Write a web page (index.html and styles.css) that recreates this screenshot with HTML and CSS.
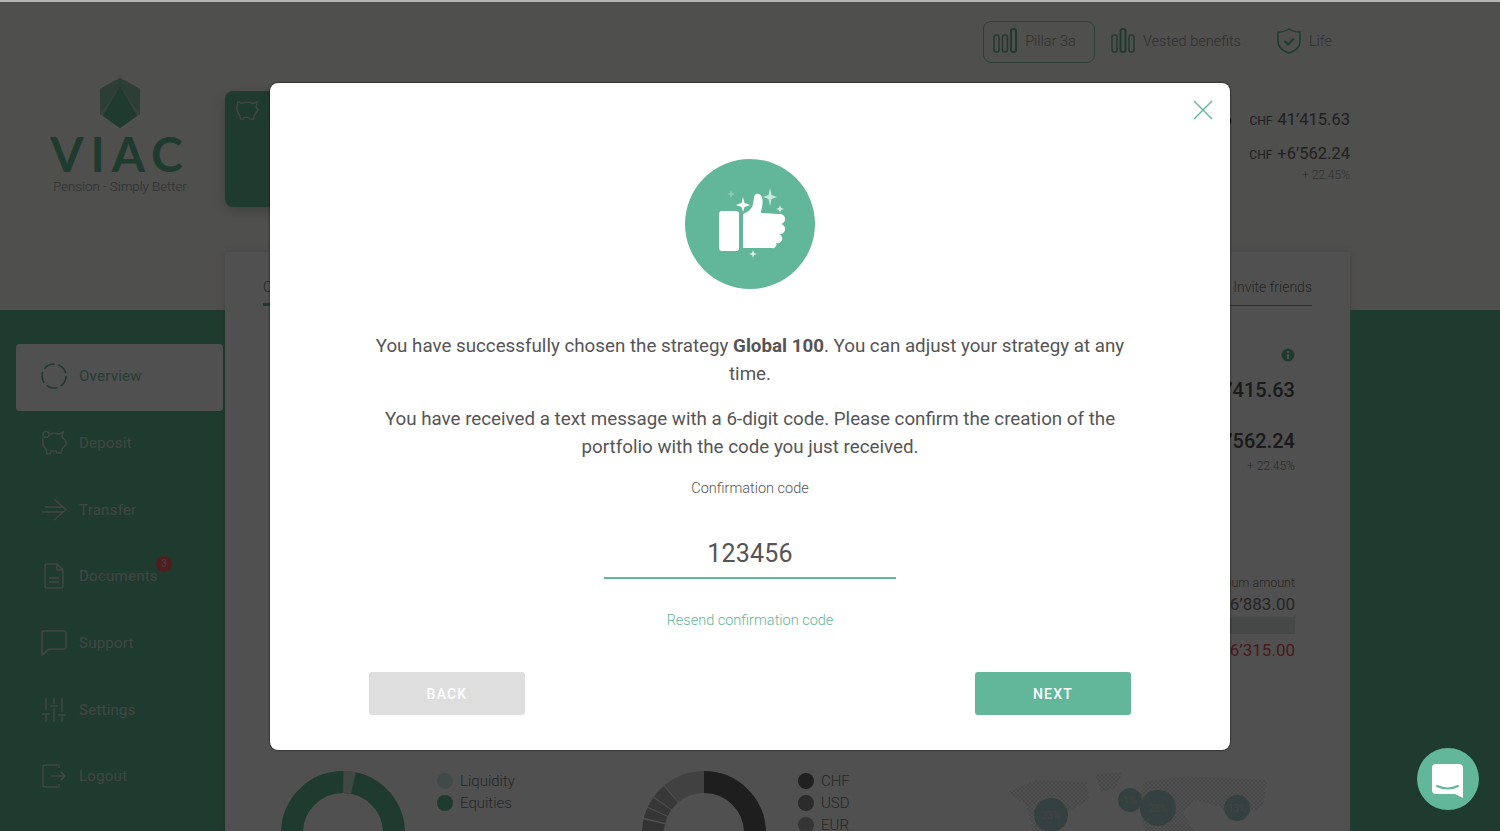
FILE: index.html
```html
<!DOCTYPE html>
<html lang="en">
<head>
  <meta charset="UTF-8">
  <meta name="viewport" content="width=device-width, initial-scale=1.0">
  <title>VIAC - Overview</title>
  <link rel="stylesheet" href="styles.css">
</head>
<body>
  <div class="page">
    <div class="brand">
      <svg class="brand-mark" viewBox="0 0 42 50" width="42" height="50">
        <path d="M21 0 L41 11 L41 36 L21 50 L1 36 L1 11 Z" fill="#a5d2bd"/>
        <path d="M21 8 L38 38 L21 50 L4 38 Z" fill="#63b992"/>
        <path d="M21 0 L41 11 L41 36 L21 8 L1 36 L1 11 Z" fill="#8fc7ad"/>
      </svg>
      <div class="brand-name">VIAC</div>
      <div class="brand-tag">Pension - Simply Better</div>
    </div>

    <div class="top">
      <div class="products">
        <a class="product product-active">
          <svg viewBox="0 0 24 26" width="24" height="26" class="stroke-green">
            <rect x="1" y="7" width="5" height="17" rx="2"/>
            <rect x="9.5" y="7" width="5" height="17" rx="2"/>
            <rect x="18" y="1" width="5" height="23" rx="2" stroke-width="2"/>
          </svg>
          <span>Pillar 3a</span>
        </a>
        <a class="product">
          <svg viewBox="0 0 24 26" width="24" height="26" class="stroke-green">
            <rect x="1" y="7" width="5" height="17" rx="2"/>
            <rect x="9.5" y="1" width="5" height="23" rx="2" stroke-width="2"/>
            <rect x="18" y="7" width="5" height="17" rx="2"/>
          </svg>
          <span>Vested benefits</span>
        </a>
        <a class="product">
          <svg viewBox="0 0 24 26" width="24" height="26" class="stroke-green">
            <path d="M12 1 C15 3 19 4 23 4 L23 14 C23 19 18 23 12 25 C6 23 1 19 1 14 L1 4 C5 4 9 3 12 1 Z"/>
            <path d="M7.5 13 L11 16.5 L17 10.5" stroke-width="2"/>
          </svg>
          <span>Life</span>
        </a>
      </div>
      <div class="top-row">
        <div class="balance-card">
          <svg viewBox="0 0 26 24" width="24" height="22" class="stroke-white">
            <path d="M3 3 L7 5 C11 3 16 3 19 5 L24 3 L23 9 L25 12 L23 15 L21 18 L20 22 L16 22 L15 20 L10 20 L9 22 L6 22 L5 18 C2 15 1 10 3 3 Z"/>
          </svg>
        </div>
        <div class="totals">
          <div class="total-row">
            <svg class="mini-info" viewBox="0 0 8 8" width="8" height="8"><circle cx="4" cy="4" r="3.5"/></svg>
            <small>CHF</small><span>41’415.63</span>
          </div>
          <div class="total-row total-gap"><small>CHF</small><span>+6’562.24</span></div>
          <div class="total-pct">+ 22.45%</div>
        </div>
      </div>
    </div>

    <nav class="sidebar">
      <a class="nav-item nav-active">
        <svg viewBox="0 0 26 26" width="26" height="26" class="stroke-green">
          <circle cx="13" cy="13" r="12" stroke-dasharray="11.5 3.58" stroke-width="1.6"/>
        </svg>
        <span>Overview</span>
      </a>
      <a class="nav-item">
        <svg viewBox="0 0 26 26" width="26" height="26" class="stroke-white">
          <circle cx="5" cy="4.5" r="3"/>
          <path d="M9 4 C12 3 15 3 18 4 L22 2 L21 7 L25 11 L25 15 L22 17 L20 23 L16 23 L15 21 L10 21 L9 24 L6 24 L5 19 C2 16 1 12 2 8"/>
        </svg>
        <span>Deposit</span>
      </a>
      <a class="nav-item">
        <svg viewBox="0 0 26 26" width="26" height="26" class="stroke-white">
          <path d="M1 15 L22 15 M4 10 L22 10 M13 2 L25 12.5 L13 23"/>
        </svg>
        <span>Transfer</span>
      </a>
      <a class="nav-item">
        <svg viewBox="0 0 26 26" width="26" height="26" class="stroke-white">
          <path d="M6 1 L16 1 L22 7 L22 23 Q22 25 20 25 L6 25 Q4 25 4 23 L4 3 Q4 1 6 1 Z M16 1 L16 7 L22 7 M8 15 L18 15 M8 19 L18 19"/>
        </svg>
        <span>Documents</span>
        <b class="badge">3</b>
      </a>
      <a class="nav-item">
        <svg viewBox="0 0 26 26" width="26" height="26" class="stroke-white">
          <path d="M3 1 L23 1 Q25 1 25 3 L25 17 Q25 19 23 19 L8 19 L1 25 L1 3 Q1 1 3 1 Z"/>
        </svg>
        <span>Support</span>
      </a>
      <a class="nav-item">
        <svg viewBox="0 0 26 26" width="26" height="26" class="stroke-white">
          <path d="M5 1 L5 13 M5 18 L5 25 M1 17 L9 17 M13 1 L13 7 M13 11 L13 25 M9 9 L17 9 M21 1 L21 15 M21 19 L21 25 M17 18 L25 18"/>
        </svg>
        <span>Settings</span>
      </a>
      <a class="nav-item">
        <svg viewBox="0 0 26 26" width="26" height="26" class="stroke-white">
          <path d="M18 5 L18 2 L4 2 Q2 2 2 4 L2 22 Q2 24 4 24 L18 24 L18 21 M10 13 L24 13 M20 9 L24 13 L20 17"/>
        </svg>
        <span>Logout</span>
      </a>
    </nav>

    <main class="panel">
      <div class="tabs">
        <a class="tab tab-active">Overview</a>
        <a class="tab">Invite friends</a>
      </div>
      <div class="stats">
        <svg class="info" viewBox="0 0 14 14" width="14" height="14">
          <circle cx="7" cy="7" r="6.5" fill="#63b992"/>
          <rect x="6" y="6" width="2" height="5" fill="#fff"/>
          <rect x="6" y="3" width="2" height="2" fill="#fff"/>
        </svg>
        <div class="stat stat-first">CHF 41’415.63</div>
        <div class="stat stat-second">CHF +6’562.24</div>
        <div class="stat-pct">+ 22.45%</div>
        <div class="limit-label">Maximum amount</div>
        <div class="limit">CHF 6’883.00</div>
        <div class="limit-bar"></div>
        <div class="limit limit-red">CHF 6’315.00</div>
      </div>
      <div class="charts">
        <section>
          <h4>Asset classes</h4>
          <div class="chart">
            <svg class="donut" viewBox="0 0 124 124" width="124" height="124">
              <circle cx="62" cy="62" r="51" pathLength="100" stroke="#63b992"/>
              <circle cx="62" cy="62" r="51" pathLength="100" stroke="#cfe4de" stroke-dasharray="3.2 96.8" stroke-dashoffset="-0.1"/>
            </svg>
            <ul class="legend">
              <li><i class="dot dot-liquidity"></i>Liquidity</li>
              <li><i class="dot dot-equities"></i>Equities</li>
            </ul>
          </div>
        </section>
        <section>
          <h4>Currencies</h4>
          <div class="chart">
            <svg class="donut" viewBox="0 0 124 124" width="124" height="124">
              <circle cx="62" cy="62" r="51" pathLength="100" stroke="#5f5f5f" stroke-dasharray="36 64"/>
              <circle cx="62" cy="62" r="51" pathLength="100" stroke="#999" stroke-dasharray="38.7 61.3" stroke-dashoffset="-36"/>
              <circle cx="62" cy="62" r="51" pathLength="100" stroke="#a4a4a4" stroke-dasharray="3.5 96.5" stroke-dashoffset="-75"/>
              <circle cx="62" cy="62" r="51" pathLength="100" stroke="#a8a8a8" stroke-dasharray="2.7 97.3" stroke-dashoffset="-79"/>
              <circle cx="62" cy="62" r="51" pathLength="100" stroke="#aeaeae" stroke-dasharray="2.7 97.3" stroke-dashoffset="-82"/>
              <circle cx="62" cy="62" r="51" pathLength="100" stroke="#b4b4b4" stroke-dasharray="3.7 96.3" stroke-dashoffset="-85"/>
              <circle cx="62" cy="62" r="51" pathLength="100" stroke="#d0d0d0" stroke-dasharray="11 89" stroke-dashoffset="-89"/>
            </svg>
            <ul class="legend">
              <li><i class="dot dot-chf"></i>CHF</li>
              <li><i class="dot dot-usd"></i>USD</li>
              <li><i class="dot dot-eur"></i>EUR</li>
            </ul>
          </div>
        </section>
        <section>
          <h4>Regions</h4>
          <svg class="map" viewBox="0 0 265 62" width="265" height="62">
            <defs>
              <pattern id="dots" width="4" height="4" patternUnits="userSpaceOnUse">
                <rect width="2" height="2" fill="#e6e6e6"/>
                <rect x="2" y="2" width="2" height="2" fill="#e6e6e6"/>
              </pattern>
            </defs>
            <g fill="url(#dots)">
              <path d="M3 22 L30 10 L82 12 L84 30 L62 42 L50 62 L28 62 L22 36 Z"/>
              <path d="M90 4 L118 2 L110 18 L96 22 Z"/>
              <path d="M138 12 L180 6 L262 10 L258 36 L232 50 L212 36 L190 30 L178 42 L190 62 L140 62 L134 36 Z"/>
            </g>
            <g class="bubbles">
              <circle cx="46" cy="45" r="17"/>
              <circle cx="125" cy="30" r="12"/>
              <circle cx="153" cy="38" r="18"/>
              <circle cx="232" cy="38" r="13"/>
            </g>
            <g class="bubble-text">
              <text x="46" y="49">33%</text>
              <text x="125" y="34">1%</text>
              <text x="153" y="42">28%</text>
              <text x="232" y="42">13%</text>
            </g>
          </svg>
        </section>
      </div>
    </main>

    <div class="side-green"></div>
  </div>

  <div class="overlay">
    <div class="modal">
      <svg class="close" viewBox="0 0 20 20" width="20" height="20">
        <path d="M1 1 L19 19 M19 1 L1 19"/>
      </svg>
      <svg class="success" viewBox="0 0 130 130" width="130" height="130">
        <circle cx="65" cy="65" r="65" fill="#62b79a"/>
        <rect x="34" y="52" width="20" height="40" rx="3" fill="#fff"/>
        <path fill="#fff" d="M58 55 C63 53 67 50 68 45 L69 39 C69 35 72 34 74 35 C77 36 78 40 77.5 45 C77 49 76 51 76 54 L94 55 A5 5 0 0 1 96 65 A5 5 0 0 1 94 75 A4.500 4.500 0 0 1 91 84 A3.500 3.500 0 0 1 87 89 L58 89 Z"/>
        <path fill="#fff" d="M58 38 L59.500 44 L65 46 L59.500 48 L58 53 L56.500 48 L51 46 L56.500 44 Z"/>
        <path fill="#c9e8dc" d="M85 29 L86.500 36 L92 38 L86.500 40 L85 47 L83.500 40 L78 38 L83.500 36 Z"/>
        <path fill="#d8efe6" d="M95 46 L96 49 L99 50 L96 51 L95 54 L94 51 L91 50 L94 49 Z"/>
        <path fill="#d8efe6" d="M68 91 L69 94 L72 95 L69 96 L68 99 L67 96 L64 95 L67 94 Z"/>
        <path fill="#8fcdb6" d="M46 31 L47 34 L50 35 L47 36 L46 39 L45 36 L42 35 L45 34 Z"/>
      </svg>
      <p class="message message-first">You have successfully chosen the strategy <strong>Global 100</strong>. You can adjust your strategy at any time.</p>
      <p class="message message-second">You have received a text message with a 6-digit code. Please confirm the creation of the portfolio with the code you just received.</p>
      <div class="code-label">Confirmation code</div>
      <div class="code-value">123456</div>
      <a class="resend">Resend confirmation code</a>
      <div class="actions">
        <button class="btn btn-back">BACK</button>
        <button class="btn btn-next">NEXT</button>
      </div>
    </div>
  </div>

  <a class="chat">
    <svg viewBox="0 0 32 34" width="32" height="34">
      <path fill="#fff" d="M4 0 L27 0 Q31 0 31 4 L31 34 L23 30 L4 30 Q0 30 0 26 L0 4 Q0 0 4 0 Z"/>
      <path fill="none" stroke="#62b79a" stroke-width="2" stroke-linecap="round" d="M5 22 Q15.500 27 26 22"/>
    </svg>
  </a>
</body>
</html>
```

FILE: styles.css
```css
* {
  box-sizing: border-box;
}
html, body {
  height: 100%;
}
body {
  margin: 0;
  overflow: hidden;
  font-family: 'Roboto', sans-serif;
  background-color: #fff;
  color: #333;
}
a {
  color: inherit;
  text-decoration: none;
}
.page {
  display: grid;
  grid-template-columns: 225px 1125px 150px;
  grid-template-rows: 310px 521px;
  height: 831px;
  overflow: hidden;
  background-color: #fbfaf6;
}
.stroke-green, .stroke-white {
  fill: none;
  stroke-width: 1.5;
  flex-shrink: 0;
}
.stroke-green {
  stroke: #63b992;
}
.stroke-white {
  stroke: #cfe0d8;
}

/* logo */
.brand {
  grid-column: 1;
  grid-row: 1;
  padding: 78px 0 0 15px;
  text-align: center;
}
.brand-mark {
  display: block;
  margin: 0 auto;
}
.brand-name {
  height: 48px;
  margin-top: 2px;
  font-family: 'Lato', sans-serif;
  font-size: 48px;
  line-height: 48px;
  font-weight: 700;
  letter-spacing: 7px;
  color: #63b992;
}
.brand-tag {
  font-size: 13.200px;
  font-weight: 300;
  line-height: 18px;
  color: #999;
}

/* top right */
.top {
  grid-column: 2;
  grid-row: 1;
}
.products {
  display: flex;
  justify-content: flex-end;
  gap: 8px;
  margin-top: 21px;
}
.product {
  display: flex;
  align-items: center;
  gap: 8px;
  height: 42px;
  padding: 0 17px 2px 9px;
  border: 1px solid transparent;
  border-radius: 8px;
  font-size: 14.500px;
  font-weight: 300;
  color: #999;
}
.product-active {
  margin-right: -2px;
  padding-right: 18px;
  border-color: #8cc9ac;
}
.top-row {
  display: flex;
  justify-content: space-between;
  margin-top: 28px;
}
.balance-card {
  width: 480px;
  height: 116px;
  padding: 8px 10px;
  border-radius: 8px;
  background-color: #63b992;
  box-shadow: 0 4px 12px rgba(0,0,0,0.2);
}
.totals {
  display: flex;
  flex-direction: column;
  align-items: flex-end;
  padding-top: 18px;
}
.total-row {
  display: flex;
  align-items: baseline;
  gap: 5px;
  font-size: 16.500px;
  line-height: 22px;
  color: #666;
}
.total-row small {
  font-size: 12px;
}
.mini-info {
  margin-right: 12px;
  fill: #666;
}
.total-gap {
  margin-top: 11px;
}
.total-pct {
  margin-top: 1px;
  font-size: 12px;
  font-weight: 300;
  line-height: 16px;
  color: #999;
}

/* sidebar */
.sidebar, .side-green {
  background-color: #63b992;
}
.sidebar {
  grid-column: 1;
  grid-row: 2;
  padding: 34px 2px 0 16px;
}
.side-green {
  grid-column: 3;
  grid-row: 2;
}
.nav-item {
  position: relative;
  display: flex;
  align-items: center;
  gap: 12px;
  height: 66.67px;
  padding: 0 0 2px 25px;
  border-radius: 4px;
  font-size: 15px;
  letter-spacing: 0.25px;
  color: #cfe0d8;
}
.nav-active {
  background-color: #fff;
  color: #7cc2a3;
}
.badge {
  position: absolute;
  left: 140px;
  top: 12px;
  width: 16px;
  height: 16px;
  border-radius: 50%;
  background-color: #ff5a60;
  color: #ccc;
  font-size: 10px;
  font-weight: 500;
  line-height: 16px;
  text-align: center;
  letter-spacing: 0;
}

/* main panel */
.panel {
  grid-column: 2;
  grid-row: 1 / 3;
  margin-top: 252px;
  padding: 0 38px;
  overflow: hidden;
  background-color: #fff;
  box-shadow: 0 0 8px rgba(0,0,0,0.12);
}
.tabs {
  display: flex;
  justify-content: space-between;
  height: 54px;
  padding-top: 25px;
  border-bottom: 1px solid #999;
  font-size: 14px;
  font-weight: 300;
  line-height: 20px;
  color: #777;
}
.tab-active {
  height: 29px;
  border-bottom: 3px solid #63b992;
}
.stats {
  display: flex;
  flex-direction: column;
  align-items: flex-end;
  margin-right: 17px;
}
.info {
  margin-top: 42px;
}
.stat {
  font-size: 20px;
  font-weight: 500;
  line-height: 24px;
  color: #555;
}
.stat-first {
  margin-top: 16px;
}
.stat-second {
  margin-top: 27px;
}
.stat-pct {
  margin-top: 5px;
  font-size: 12px;
  font-weight: 300;
  line-height: 16px;
  color: #888;
}
.limit-label {
  margin-top: 101px;
  font-size: 12.500px;
  font-weight: 300;
  line-height: 16px;
  color: #777;
}
.limit {
  margin-top: 2px;
  font-size: 17px;
  line-height: 22px;
  color: #777;
}
.limit-bar {
  width: 300px;
  height: 17px;
  margin-top: 2px;
  background-color: #dfe6e3;
}
.limit-red {
  margin-top: 5px;
  color: #e8505a;
}
.charts {
  display: grid;
  grid-template-columns: 361px 363px 1fr;
  margin: 69px 0 0 18px;
}
.charts h4 {
  height: 40px;
  margin: 0;
  font-size: 16px;
  font-weight: 400;
  line-height: 20px;
  color: #333;
}
.chart {
  display: flex;
  gap: 32px;
}
.donut {
  flex-shrink: 0;
  margin-top: 1px;
}
.donut circle {
  fill: none;
  stroke-width: 22;
  transform: rotate(-90deg);
  transform-origin: center;
}
.legend {
  margin: 0;
  padding: 0;
  list-style: none;
  font-size: 15px;
  font-weight: 300;
  color: #777;
}
.legend li {
  display: flex;
  align-items: center;
  gap: 7px;
  height: 22px;
}
.dot {
  width: 16px;
  height: 16px;
  border-radius: 50%;
}
.dot-liquidity {
  background-color: #d5e8e4;
}
.dot-equities {
  background-color: #63b992;
}
.dot-chf {
  background-color: #666;
}
.dot-usd {
  background-color: #888;
}
.dot-eur {
  background-color: #aaa;
}
.map {
  display: block;
}
.bubbles circle {
  fill: #a8cfcc;
}
.bubble-text text {
  fill: #d8d8d8;
  font-size: 10px;
  text-anchor: middle;
}

/* modal */
.overlay {
  position: absolute;
  inset: 0;
  display: flex;
  align-items: center;
  justify-content: center;
  height: 831px;
  border-top: 2px solid #b4b4b4;
  background-color: rgba(0,0,0,0.686);
}
.modal {
  position: relative;
  display: flex;
  flex-direction: column;
  align-items: center;
  width: 960px;
  height: 667px;
  padding-top: 76px;
  border-radius: 8px;
  background-color: #fff;
  box-shadow: 0 0 2px #000;
}
.close {
  position: absolute;
  top: 17px;
  right: 17px;
  fill: none;
  stroke: #62b79a;
  stroke-width: 1.4;
}
.success {
  flex-shrink: 0;
}
.message {
  width: 760px;
  margin: 0;
  font-size: 18.750px;
  line-height: 28px;
  text-align: center;
  color: #555;
}
.message-first {
  margin-top: 43px;
}
.message-second {
  margin-top: 17px;
}
.code-label {
  margin-top: 18px;
  font-size: 14.500px;
  font-weight: 300;
  line-height: 20px;
  color: #555;
}
.code-value {
  width: 292px;
  height: 48px;
  margin-top: 32px;
  border-bottom: 2px solid #62b79a;
  font-size: 25px;
  line-height: 46px;
  letter-spacing: 0.2px;
  text-align: center;
  color: #555;
}
.resend {
  margin-top: 32px;
  font-size: 14.500px;
  font-weight: 300;
  line-height: 20px;
  color: #62b79a;
}
.actions {
  display: flex;
  justify-content: space-between;
  align-self: stretch;
  margin-top: 41px;
  padding: 0 99px;
}
.btn {
  width: 156px;
  height: 43px;
  border: 0;
  border-radius: 3px;
  font-family: inherit;
  font-size: 14px;
  font-weight: 500;
  letter-spacing: 1.2px;
  color: #fff;
}
.btn-back {
  background-color: #dedede;
}
.btn-next {
  background-color: #62b79a;
}

/* chat launcher */
.chat {
  position: absolute;
  left: 1417px;
  top: 748px;
  display: flex;
  align-items: center;
  justify-content: center;
  width: 62px;
  height: 62px;
  padding-top: 3px;
  border-radius: 50%;
  background-color: #62b79a;
}
```
